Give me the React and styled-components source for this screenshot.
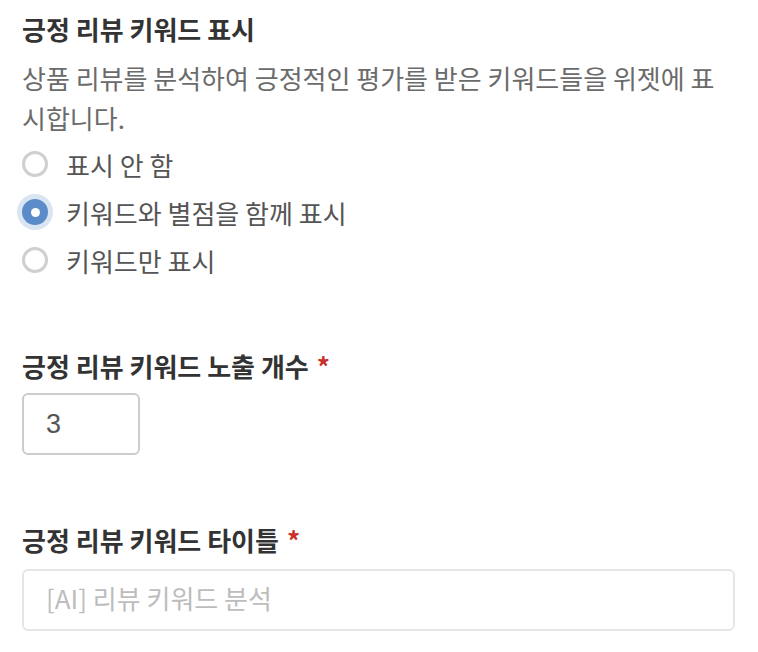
import React, { useState } from 'react';
import styled, { createGlobalStyle } from 'styled-components';

const GlobalStyle = createGlobalStyle`
  body {
    margin: 0;
    background: #ffffff;
    font-family: "Noto Sans CJK KR", "Noto Sans", sans-serif;
  }
`;

const Page = styled.div`
  padding: 11px 23px 0 22px;
`;

const Section = styled.section`
  margin-bottom: ${(p) => p.$gap || 0}px;
`;

const Title = styled.h3`
  margin: 0 0 ${(p) => p.$below || 11}px;
  font-size: 26px;
  line-height: 36px;
  font-weight: 700;
  color: #333333;
`;

const Required = styled.span`
  color: #c8302a;
  margin-left: 8px;
`;

const Description = styled.p`
  margin: 0;
  font-size: 26px;
  line-height: 40px;
  color: #6b6b6b;
`;

const RadioList = styled.div`
  display: flex;
  flex-direction: column;
  margin-top: 2px;
`;

const RadioRow = styled.label`
  display: flex;
  align-items: center;
  height: 48px;
  cursor: pointer;
`;

const RadioDot = styled.span`
  width: 26px;
  height: 26px;
  box-sizing: border-box;
  border-radius: 50%;
  flex-shrink: 0;
  border: ${(p) => (p.$checked ? 'none' : '3px solid #cfcfcf')};
  background: ${(p) => (p.$checked ? '#5b8bc9' : '#ffffff')};
  box-shadow: ${(p) => (p.$checked ? '0 0 0 5px #dbe5f2' : 'none')};
  display: flex;
  align-items: center;
  justify-content: center;

  &::after {
    content: '';
    display: ${(p) => (p.$checked ? 'block' : 'none')};
    width: 9px;
    height: 9px;
    border-radius: 50%;
    background: #ffffff;
  }
`;

const RadioText = styled.span`
  margin-left: 18px;
  font-size: 26px;
  color: #555555;
`;

const Input = styled.input`
  box-sizing: border-box;
  display: block;
  width: ${(p) => p.$width || '100%'};
  height: 62px;
  padding: 0 22px;
  border: 2px solid ${(p) => p.$border || '#cccccc'};
  border-radius: 6px;
  font-family: "Liberation Sans", "Noto Sans CJK KR", sans-serif;
  font-size: 27px;
  color: #555555;
  outline: none;

  &::placeholder {
    font-family: "Noto Sans CJK KR", sans-serif;
    font-size: 26px;
    color: #bdbdbd;
  }
`;

const options = ['표시 안 함', '키워드와 별점을 함께 표시', '키워드만 표시'];

export default function App() {
  const [mode, setMode] = useState(1);
  const [count, setCount] = useState('3');
  const [title, setTitle] = useState('');

  return (
    <Page>
      <GlobalStyle />
      <Section $gap={64}>
        <Title>긍정 리뷰 키워드 표시</Title>
        <Description>
          상품 리뷰를 분석하여 긍정적인 평가를 받은 키워드들을 위젯에 표시합니다.
        </Description>
        <RadioList>
          {options.map((label, i) => (
            <RadioRow key={label} onClick={() => setMode(i)}>
              <RadioDot $checked={mode === i} />
              <RadioText>{label}</RadioText>
            </RadioRow>
          ))}
        </RadioList>
      </Section>

      <Section $gap={67}>
        <Title $below={9}>
          긍정 리뷰 키워드 노출 개수<Required>*</Required>
        </Title>
        <Input $width="118px" value={count} onChange={(e) => setCount(e.target.value)} />
      </Section>

      <Section>
        <Title $below={11}>
          긍정 리뷰 키워드 타이틀<Required>*</Required>
        </Title>
        <Input
          $border="#e6e6e6"
          placeholder="[AI] 리뷰 키워드 분석"
          value={title}
          onChange={(e) => setTitle(e.target.value)}
        />
      </Section>
    </Page>
  );
}
